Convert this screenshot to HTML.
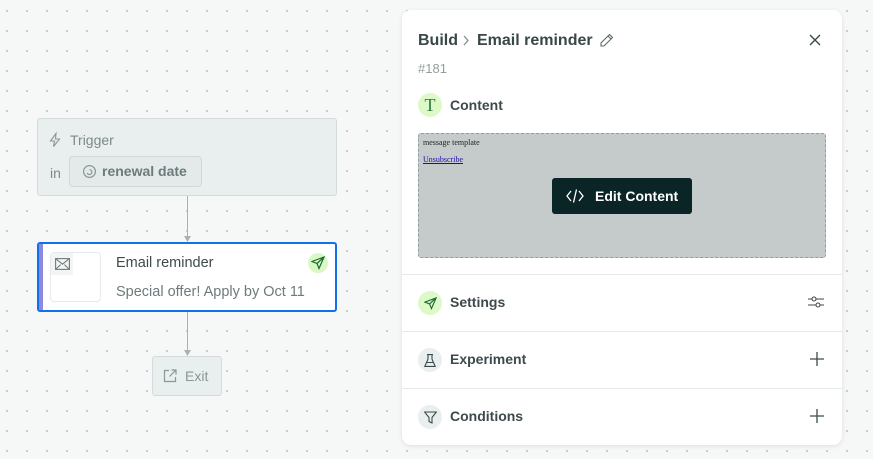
<!DOCTYPE html>
<html><head><style>
*{box-sizing:border-box;margin:0;padding:0}
body{width:873px;height:459px;overflow:hidden;font-family:"Liberation Sans",sans-serif;background-color:#f6f7f7;background-image:radial-gradient(circle,#c5cbcb 1px,transparent 1.3px);background-size:20px 20px;background-position:-3px 1px;position:relative}
.abs{position:absolute}
.trig{left:37px;top:118px;width:300px;height:78px;background:#e9eeee;border:1px solid #d3dbdb;border-radius:3px}
.pill{left:69px;top:156px;width:133px;height:31px;border:1px solid #d0d8d8;border-radius:4px;background:#e4eaea;font-weight:bold;color:#6d7b7c;font-size:14px;line-height:29px;padding-left:32px}
.line{width:1px;background:#a9b2b3;left:187px}
.card{left:37px;top:242px;width:300px;height:70px;background:#fff;border:2px solid #1170ea;border-radius:3px;overflow:hidden}
.exit{left:152px;top:356px;width:70px;height:40px;background:#e9eeee;border:1px solid #d3dbdb;border-radius:3px;color:#8a9697;font-size:14px;line-height:38px;padding-left:32px}
.panel{left:402px;top:10px;width:440px;height:435px;background:#fff;border-radius:9px;box-shadow:0 1px 4px rgba(0,0,0,.1)}
.row{position:absolute;left:0;width:440px;height:57px;border-top:1px solid #e5ebeb}
.row .ic{position:absolute;left:16px;top:16px;width:24px;height:24px;border-radius:50%;background:#e9eeee}
.row .t{position:absolute;left:48px;top:19px;font-size:14px;font-weight:bold;color:#3d4a4c}
.row svg.r{position:absolute;right:18px;top:20px}
</style></head><body>
<div class="abs trig">
 <svg class="abs" style="left:9px;top:13px" width="16" height="16" viewBox="0 0 16 16" fill="none" stroke="#8a9697" stroke-width="1.1"><path d="M9 1.5L3.5 9h4L6.5 14.5 12.5 7h-4z"/></svg>
 <div class="abs" style="left:32px;top:13px;font-size:14px;color:#7d898a">Trigger</div>
 <div class="abs" style="left:12px;top:46px;font-size:14px;color:#7d898a">in</div>
</div>
<div class="abs pill"><svg class="abs" style="left:12px;top:7px" width="15" height="15" viewBox="0 0 16 16" fill="none" stroke="#8a9697" stroke-width="1.3"><circle cx="8" cy="8" r="6.3"/><path d="M5.5 9.5a2.6 2.6 0 1 0 2.5-3.5"/></svg>renewal date</div>
<div class="abs line" style="top:196px;height:44px"></div>
<svg class="abs" style="left:184px;top:236px" width="7" height="6"><path d="M0 0L3.5 6 7 0" fill="#a9b2b3"/></svg>
<div class="abs card">
 <div class="abs" style="left:0;top:0;width:4px;height:70px;background:#8e89df"></div>
 <div class="abs" style="left:11px;top:8px;width:51px;height:50px;border:1px solid #e6eaea;border-radius:4px"></div>
 <div class="abs" style="left:12px;top:9px;width:22px;height:22px;background:#f3f5f5"></div>
 <svg class="abs" style="left:16px;top:14px" width="15" height="12" viewBox="0 0 15 12" fill="none" stroke="#6f7b7c" stroke-width="1.1"><rect x=".6" y=".6" width="13.8" height="10.8"/><path d="M.6 .6l6.9 5.6L14.4.6M.6 11.4l5-4.8M14.4 11.4l-5-4.8"/></svg>
 <div class="abs" style="left:77px;top:11px;font-size:14.5px;color:#3d4a4c">Email reminder</div>
 <div class="abs" style="left:77px;top:40px;font-size:14.5px;color:#6d7b7c">Special offer! Apply by Oct 11</div>
 <div class="abs" style="left:269px;top:9px;width:20px;height:20px;border-radius:50%;background:#d9f8c4"></div>
 <svg class="abs" style="left:272px;top:12px" width="14" height="14" viewBox="0 0 14 14" fill="none" stroke="#1b6b33" stroke-width="1.2"><path d="M13 1L1 5.5l5 2 2 5z M13 1L6 7.5"/></svg>
</div>
<div class="abs line" style="top:312px;height:42px"></div>
<svg class="abs" style="left:184px;top:350px" width="7" height="6"><path d="M0 0L3.5 6 7 0" fill="#a9b2b3"/></svg>
<div class="abs exit"><svg class="abs" style="left:10px;top:12px" width="14" height="14" viewBox="0 0 14 14" fill="none" stroke="#8a9697" stroke-width="1.2"><path d="M6 1.5H1.5v11h11V8M8.5 1h4.5v4.5M13 1L6.5 7.5"/></svg>Exit</div>

<div class="abs panel">
 <div class="abs" style="left:16px;top:22px;font-size:16px;font-weight:bold;color:#3a4749">Build</div>
 <svg class="abs" style="left:60px;top:25px" width="8" height="11" viewBox="0 0 8 11" fill="none" stroke="#7d898a" stroke-width="1.2"><path d="M2 1l4 4.5L2 10"/></svg>
 <div class="abs" style="left:75px;top:22px;font-size:16px;font-weight:bold;color:#3a4749">Email reminder</div>
 <svg class="abs" style="left:197px;top:23px" width="15" height="15" viewBox="0 0 15 15" fill="none" stroke="#5b6869" stroke-width="1.1"><path d="M10.5 1.5l3 3L5 13H2v-3z M9 3l3 3"/></svg>
 <svg class="abs" style="left:407px;top:24px" width="12" height="12" viewBox="0 0 12 12" stroke="#3d4a4c" stroke-width="1.4"><path d="M1 1l10 10M11 1L1 11"/></svg>
 <div class="abs" style="left:16px;top:51px;font-size:13px;color:#929d9e">#181</div>
 <div class="abs" style="left:16px;top:83px;width:24px;height:24px;border-radius:50%;background:#dcf9c7;color:#2f7a3f;font-family:'Liberation Serif',serif;font-size:18px;text-align:center;line-height:24px">T</div>
 <div class="abs" style="left:48px;top:87px;font-size:14px;font-weight:bold;color:#3d4a4c">Content</div>
 <div class="abs" style="left:16px;top:123px;width:408px;height:125px;background:#c5caca;border:1px dashed #949c9d;border-radius:3px">
  <div class="abs" style="left:4px;top:4px;font-family:'Liberation Serif',serif;font-size:8px;color:#222">message template</div>
  <div class="abs" style="left:4px;top:21px;font-family:'Liberation Serif',serif;font-size:8px;color:#1a0dab;text-decoration:underline">Unsubscribe</div>
  <div class="abs" style="left:133px;top:44px;width:140px;height:36px;background:#0b2527;border-radius:3px;color:#fff;font-size:14px;font-weight:bold;line-height:36px;padding-left:43px">Edit Content</div>
  <svg class="abs" style="left:147px;top:54px" width="18" height="16" viewBox="0 0 18 16" fill="none" stroke="#fff" stroke-width="1.3"><path d="M5 3L1 8l4 5M13 3l4 5-4 5M10.5 1.5l-3 13"/></svg>
 </div>
 <div class="row" style="top:264px"><div class="ic" style="background:#dcf9c7"></div>
  <svg class="abs" style="left:22px;top:22px" width="13" height="13" viewBox="0 0 14 14" fill="none" stroke="#1b6b33" stroke-width="1.2"><path d="M13 1L1 5.5l5 2 2 5z M13 1L6 7.5"/></svg>
  <div class="t">Settings</div>
  <svg class="r" width="16" height="14" viewBox="0 0 16 14" fill="none" stroke="#3d4a4c" stroke-width="1.1"><path d="M0 4h4M8 4h8M0 10h8M12 10h4"/><circle cx="6" cy="4" r="2"/><circle cx="10" cy="10" r="2"/></svg></div>
 <div class="row" style="top:321px"><div class="ic"></div>
  <svg class="abs" style="left:22px;top:22px" width="12" height="13" viewBox="0 0 12 13" fill="none" stroke="#3d4a4c" stroke-width="1.1"><path d="M3 .6h6M4 .6v4.5L.8 12.4h10.4L8 5.1V.6M2.5 8.5h7"/></svg>
  <div class="t">Experiment</div>
  <svg class="r" width="14" height="14" viewBox="0 0 14 14" stroke="#3d4a4c" stroke-width="1.3"><path d="M7 0v14M0 7h14"/></svg></div>
 <div class="row" style="top:378px"><div class="ic"></div>
  <svg class="abs" style="left:22px;top:22px" width="13" height="13" viewBox="0 0 13 13" fill="none" stroke="#3d4a4c" stroke-width="1.1"><path d="M.6 1h11.8L8 6.5v5.5l-3-1.5V6.5z"/></svg>
  <div class="t">Conditions</div>
  <svg class="r" width="14" height="14" viewBox="0 0 14 14" stroke="#3d4a4c" stroke-width="1.3"><path d="M7 0v14M0 7h14"/></svg></div>
</div>
</body></html>
